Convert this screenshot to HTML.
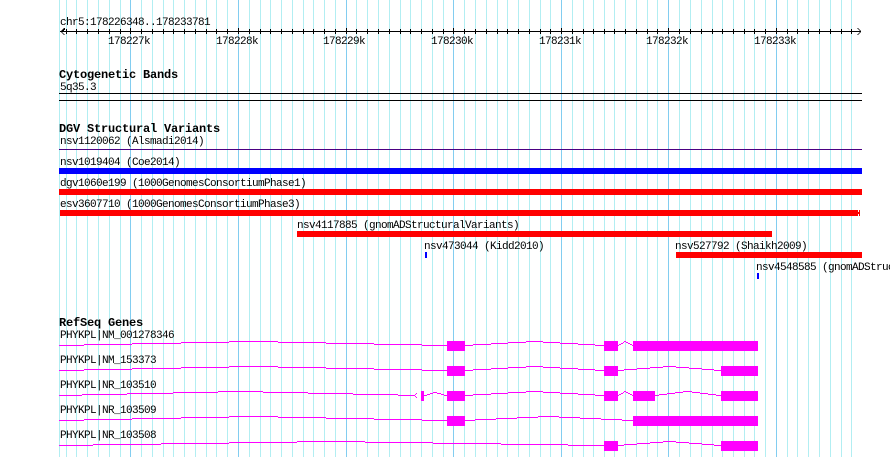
<!DOCTYPE html>
<html><head><meta charset="utf-8"><style>
html,body{margin:0;padding:0;background:#fff;width:890px;height:457px;overflow:hidden}
svg{display:block}
text{font-family:"Liberation Mono","DejaVu Sans Mono",monospace;font-size:11px;letter-spacing:-0.6px;fill:#000}
text.b{font-weight:bold;font-size:12px;letter-spacing:-0.2px}
</style></head><body>
<svg width="890" height="457" viewBox="0 0 890 457" shape-rendering="crispEdges">
<path stroke="#b2eef2" stroke-width="1" fill="none" d="M59.5 0V457M66.5 0V457M76.5 0V457M87.5 0V457M98.5 0V457M109.5 0V457M120.5 0V457M141.5 0V457M152.5 0V457M163.5 0V457M173.5 0V457M184.5 0V457M195.5 0V457M206.5 0V457M216.5 0V457M227.5 0V457M249.5 0V457M260.5 0V457M270.5 0V457M281.5 0V457M292.5 0V457M303.5 0V457M313.5 0V457M324.5 0V457M335.5 0V457M356.5 0V457M367.5 0V457M378.5 0V457M389.5 0V457M400.5 0V457M410.5 0V457M421.5 0V457M432.5 0V457M443.5 0V457M464.5 0V457M475.5 0V457M486.5 0V457M497.5 0V457M507.5 0V457M518.5 0V457M529.5 0V457M540.5 0V457M550.5 0V457M572.5 0V457M583.5 0V457M593.5 0V457M604.5 0V457M614.5 0V457M625.5 0V457M636.5 0V457M647.5 0V457M657.5 0V457M679.5 0V457M690.5 0V457M701.5 0V457M712.5 0V457M722.5 0V457M733.5 0V457M744.5 0V457M754.5 0V457M765.5 0V457M787.5 0V457M797.5 0V457M808.5 0V457M819.5 0V457M830.5 0V457M841.5 0V457M851.5 0V457"/>
<path stroke="#82cdf0" stroke-width="1" fill="none" d="M130.5 0V457M238.5 0V457M346.5 0V457M453.5 0V457M561.5 0V457M668.5 0V457M776.5 0V457"/>

<text x="60" y="25">chr5:178226348..178233781</text>
<path stroke="#000" fill="none" d="M60 31.5H861M66.5 29V34M76.5 29V34M87.5 29V34M98.5 29V34M109.5 29V34M120.5 29V34M130.5 28V34M141.5 29V34M152.5 29V34M163.5 29V34M173.5 29V34M184.5 29V34M195.5 29V34M206.5 29V34M216.5 29V34M227.5 29V34M238.5 28V34M249.5 29V34M260.5 29V34M270.5 29V34M281.5 29V34M292.5 29V34M303.5 29V34M313.5 29V34M324.5 29V34M335.5 29V34M346.5 28V34M356.5 29V34M367.5 29V34M378.5 29V34M389.5 29V34M400.5 29V34M410.5 29V34M421.5 29V34M432.5 29V34M443.5 29V34M453.5 28V34M464.5 29V34M475.5 29V34M486.5 29V34M497.5 29V34M507.5 29V34M518.5 29V34M529.5 29V34M540.5 29V34M550.5 29V34M561.5 28V34M572.5 29V34M583.5 29V34M593.5 29V34M604.5 29V34M614.5 29V34M625.5 29V34M636.5 29V34M647.5 29V34M657.5 29V34M668.5 28V34M679.5 29V34M690.5 29V34M701.5 29V34M712.5 29V34M722.5 29V34M733.5 29V34M744.5 29V34M754.5 29V34M765.5 29V34M776.5 28V34M787.5 29V34M797.5 29V34M808.5 29V34M819.5 29V34M830.5 29V34M841.5 29V34M851.5 29V34"/>
<path stroke="#000" fill="none" d="M63.5 28.5H64.5V29.5H63.5M62.5 29.5H63.5V30.5H62.5M61.5 30.5H62.5M61.5 32.5H62.5M62.5 33.5H63.5M63.5 34.5H64.5M857.5 28.5H858.5M858.5 29.5H859.5M859.5 30.5H860.5M859.5 32.5H860.5M858.5 33.5H859.5M857.5 34.5H858.5"/>
<text x="108" y="44">178227k</text>
<text x="216" y="44">178228k</text>
<text x="323" y="44">178229k</text>
<text x="431" y="44">178230k</text>
<text x="539" y="44">178231k</text>
<text x="646" y="44">178232k</text>
<text x="754" y="44">178233k</text>

<text class="b" x="59" y="78">Cytogenetic Bands</text>
<text x="60" y="90">5q35.3</text>
<rect x="59" y="93" width="803" height="1" fill="#000"/>
<rect x="59" y="100" width="803" height="1" fill="#000"/>

<text class="b" x="59" y="132">DGV Structural Variants</text>
<text x="60" y="144">nsv1120062 (Alsmadi2014)</text>
<rect x="59" y="149" width="803" height="1" fill="#4b0082"/>
<text x="60" y="165">nsv1019404 (Coe2014)</text>
<rect x="59" y="168" width="803" height="6" fill="#0000ff"/>
<text x="60" y="186">dgv1060e199 (1000GenomesConsortiumPhase1)</text>
<rect x="59" y="189" width="803" height="6" fill="#ff0000"/>
<text x="60" y="207">esv3607710 (1000GenomesConsortiumPhase3)</text>
<rect x="60" y="210" width="798" height="6" fill="#ff0000"/>
<rect x="859" y="210" width="1" height="6" fill="#ff0000"/>
<rect x="858" y="212" width="2" height="2" fill="#ff0000"/>
<text x="297" y="228">nsv4117885 (gnomADStructuralVariants)</text>
<rect x="297" y="231" width="475" height="6" fill="#ff0000"/>
<text x="424" y="249">nsv473044 (Kidd2010)</text>
<rect x="425" y="252" width="2" height="6" fill="#0000ff"/>
<text x="675" y="249">nsv527792 (Shaikh2009)</text>
<rect x="676" y="252" width="186" height="6" fill="#ff0000"/>
<text x="756" y="270">nsv4548585 (gnomADStruc</text>
<rect x="757" y="273" width="2" height="6" fill="#0000ff"/>

<text class="b" x="59" y="326">RefSeq Genes</text>
<text x="60" y="338">PHYKPL|NM_001278346</text>
<text x="60" y="363">PHYKPL|NM_153373</text>
<text x="60" y="388">PHYKPL|NR_103510</text>
<text x="60" y="413">PHYKPL|NR_103509</text>
<text x="60" y="438">PHYKPL|NR_103508</text>

<g fill="#ff00ff">
<rect x="447" y="341" width="18" height="10"/><rect x="604" y="341" width="14" height="10"/><rect x="633" y="341" width="125" height="10"/>
<rect x="447" y="366" width="18" height="10"/><rect x="604" y="366" width="14" height="10"/><rect x="721" y="366" width="37" height="10"/>
<rect x="421" y="391" width="3" height="10"/><rect x="447" y="391" width="18" height="10"/><rect x="604" y="391" width="14" height="10"/><rect x="633" y="391" width="22" height="10"/><rect x="721" y="391" width="37" height="10"/>
<rect x="447" y="416" width="18" height="10"/><rect x="633" y="416" width="125" height="10"/>
<rect x="604" y="441" width="14" height="10"/><rect x="721" y="441" width="37" height="10"/>
</g>
<g stroke="#ff00ff" stroke-width="1" fill="none">
<path d="M59 345.5H84M84 344.5H132M132 343.5H181M181 342.5H229M229 341.5H278M278 342.5H326M326 343.5H374M374 344.5H422M422 345.5H447M465 345.5H473M473 344.5H491M491 343.5H508M508 342.5H526M526 341.5H543M543 342.5H560M560 343.5H578M578 344.5H595M595 345.5H604M618 345.5H619M619 344.5H621M621 343.5H623M623 342.5H624M624 341.5H626M626 342.5H628M628 343.5H630M630 344.5H632M632 345.5H633"/>
<path d="M59 370.5H84M84 369.5H132M132 368.5H181M181 367.5H229M229 366.5H278M278 367.5H326M326 368.5H374M374 369.5H422M422 370.5H447M465 370.5H473M473 369.5H491M491 368.5H508M508 367.5H526M526 366.5H543M543 367.5H560M560 368.5H578M578 369.5H595M595 370.5H604M618 370.5H624M624 369.5H637M637 368.5H650M650 367.5H663M663 366.5H676M676 367.5H689M689 368.5H702M702 369.5H714M714 370.5H721"/>
<path d="M59 395.5H82M82 394.5H127M127 393.5H173M173 392.5H218M218 391.5H263M263 392.5H308M308 393.5H353M353 394.5H398M398 395.5H414M424 395.5H427M427 394.5H430M430 393.5H433M433 392.5H437M437 393.5H441M441 394.5H444M444 395.5H447M465 395.5H473M473 394.5H491M491 393.5H508M508 392.5H526M526 391.5H543M543 392.5H560M560 393.5H578M578 394.5H595M595 395.5H604M618 395.5H619M619 394.5H621M621 393.5H623M623 392.5H624M624 391.5H626M626 392.5H628M628 393.5H630M630 394.5H632M632 395.5H633M655 395.5H659M659 394.5H667M667 393.5H675M675 392.5H683M683 391.5H692M692 392.5H700M700 393.5H708M708 394.5H716M716 395.5H721"/>
<path d="M414 395.5H415M415 394.5H416M416 393.5H417M415 396.5H416M416 397.5H417"/>
<path d="M59 420.5H84M84 419.5H132M132 418.5H181M181 417.5H229M229 416.5H278M278 417.5H326M326 418.5H374M374 419.5H422M422 420.5H447M465 420.5H475M475 419.5H496M496 418.5H517M517 417.5H538M538 416.5H559M559 417.5H580M580 418.5H601M601 419.5H622M622 420.5H633"/>
<path d="M59 445.5H93M93 444.5H161M161 443.5H229M229 442.5H297M297 441.5H365M365 442.5H433M433 443.5H501M501 444.5H568M568 445.5H604M618 445.5H624M624 444.5H637M637 443.5H650M650 442.5H663M663 441.5H676M676 442.5H689M689 443.5H702M702 444.5H714M714 445.5H721"/>
</g>
</svg>
</body></html>
